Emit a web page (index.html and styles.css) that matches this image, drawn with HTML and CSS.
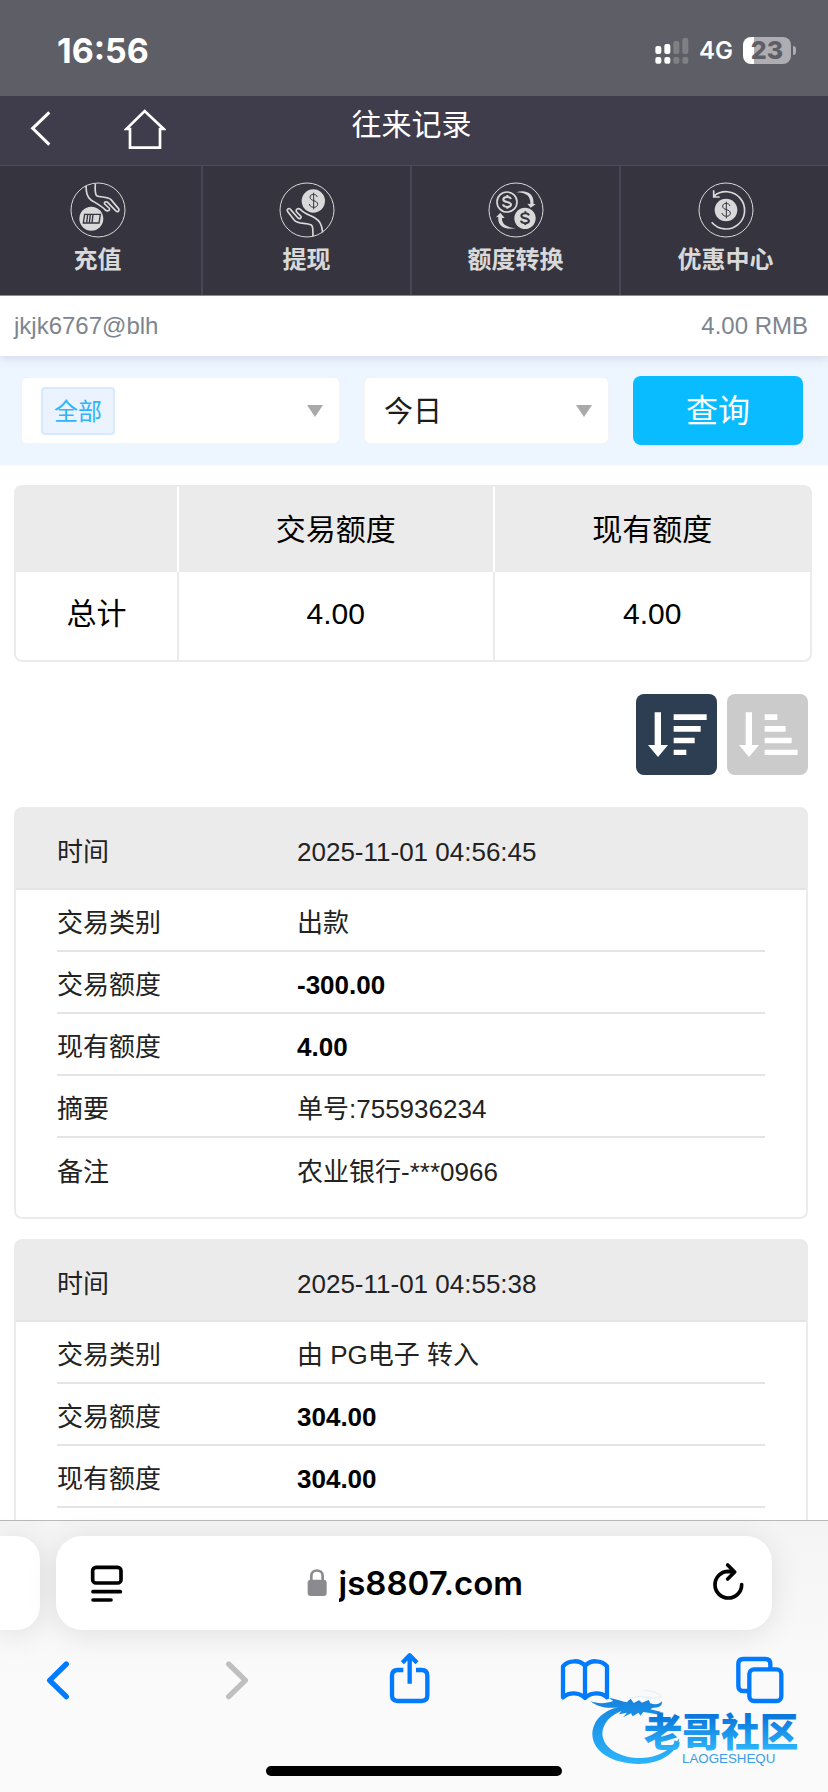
FILE: index.html
```html
<!DOCTYPE html>
<html lang="zh-CN">
<head>
    <meta charset="UTF-8">
    <meta name="viewport" content="width=device-width, initial-scale=1.0">
    <title>往来记录</title>
    <link rel="stylesheet" href="styles.css">
</head>
<body>
    <div class="status-bar">
        <span class="clock">16:56</span>
        <div class="status-icons">
            <svg class="signal" viewBox="0 0 102 81">
                <g fill="#fff">
                    <rect x="1" y="27" width="18" height="24" rx="6"/><rect x="1" y="60" width="18" height="20" rx="6"/>
                    <rect x="28" y="21" width="18" height="30" rx="6"/><rect x="28" y="60" width="18" height="20" rx="6"/>
                </g>
                <g fill="#7f7f84">
                    <rect x="55" y="12" width="18" height="39" rx="6"/><rect x="55" y="60" width="18" height="20" rx="6"/>
                    <rect x="82" y="3" width="18" height="48" rx="6"/><rect x="82" y="60" width="18" height="20" rx="6"/>
                </g>
            </svg>
            <span class="network">4G</span>
            <div class="battery">23</div>
        </div>
    </div>

    <header class="header">
        <div class="header-links">
            <a href="#" class="header-link" aria-label="返回">
                <svg class="back-icon" viewBox="90 329 66 114" fill="none" stroke="#fff" stroke-width="9"><path d="M148 336L98 384L148 433"/></svg>
            </a>
            <a href="#" class="header-link" aria-label="首页">
                <svg class="home-icon" viewBox="372 321 126 126" fill="none" stroke="#fff" stroke-width="8"><path d="M390 384H379L434 330L491 384H480V440H390Z"/></svg>
            </a>
        </div>
        <h1 class="title">往来记录</h1>
    </header>

    <nav class="nav">
        <a href="#" class="nav-item">
            <svg class="nav-icon" viewBox="209 545 168 168" fill="none" stroke="#d9d9d9" stroke-width="5">
                <circle cx="293" cy="629" r="81" stroke-width="3"/>
                <path d="M257 556C258 574 258 588 272 599C288 609 304 617 315 629C322 635 331 630 326 623L313 611C310 606 317 602 322 606L345 630C351 638 360 631 354 624L332 598C322 588 300 592 289 586C283 580 284 566 285 550"/>
                <circle cx="273" cy="655" r="36" fill="#d9d9d9" stroke="none"/>
                <g stroke="#35343f" stroke-width="4"><path d="M253 642H300L296 668H249Z"/><path d="M262 643L259 667M270 643L267 667M278 643L275 667"/></g>
            </svg>
            <span>充值</span>
        </a>
        <a href="#" class="nav-item">
            <svg class="nav-icon" viewBox="838 545 168 168" fill="none" stroke="#d9d9d9" stroke-width="5">
                <circle cx="922" cy="629" r="81" stroke-width="3"/>
                <path d="M969 696C966 670 959 661 946 653C927 643 913 639 902 627C895 622 886 628 891 635L904 648C906 654 900 657 895 653L873 628C868 620 859 627 865 635L884 660C895 673 918 666 935 674C942 680 939 694 940 708"/>
                <circle cx="941" cy="602" r="35" fill="#d9d9d9" stroke="none"/>
                <path stroke="#35343f" d="M953 590C951 579 931 580 931 590C931 604 954 598 954 612C954 624 931 624 929 611M942 577V627" stroke-width="3"/>
            </svg>
            <span>提现</span>
        </a>
        <a href="#" class="nav-item">
            <svg class="nav-icon" viewBox="221 545 168 168" fill="none" stroke="#d9d9d9" stroke-width="5">
                <circle cx="305" cy="629" r="81" stroke-width="3"/>
                <circle cx="278" cy="605" r="30"/>
                <path d="M290 596C287 588 268 588 267 597C266 608 290 602 290 613C288 622 268 622 266 612M279 584V591M279 618V625" stroke-width="6"/>
                <circle cx="332" cy="654" r="32" fill="#d9d9d9" stroke="none"/>
                <path stroke="#35343f" d="M344 645C341 637 322 637 321 646C320 657 344 651 344 662C342 671 322 671 320 661M333 633V640M333 667V674" stroke-width="6"/>
                <path fill="#d9d9d9" stroke="none" d="M306 576C331 567 361 577 357 610L364 612L349 622L339 610L348 611C349 588 337 577 306 576ZM306 683C277 690 248 681 252 650L245 651L258 637L271 653L263 653C262 672 276 682 306 683Z"/>
            </svg>
            <span>额度转换</span>
        </a>
        <a href="#" class="nav-item">
            <svg class="nav-icon" viewBox="850 545 168 168" fill="none" stroke="#d9d9d9" stroke-width="5">
                <circle cx="934" cy="629" r="81" stroke-width="3"/>
                <path d="M891 666A56 56 0 1 0 898 587M897 570V590H915"/>
                <circle cx="934" cy="629" r="34" fill="#d9d9d9" stroke="none"/>
                <path stroke="#35343f" d="M946 617C944 606 924 607 924 617C924 631 947 625 947 639C947 651 924 651 922 638M935 604V654" stroke-width="3"/>
            </svg>
            <span>优惠中心</span>
        </a>
    </nav>

    <main class="content">
        <div class="account">
            <span>jkjk6767@blh</span>
            <span>4.00 RMB</span>
        </div>

        <form class="filter">
            <label class="select-box">
                <select class="select-tag" aria-label="类别"><option>全部</option></select>
                <svg class="arrow" viewBox="0 0 16 12"><path d="M0 0H16L8 12Z" fill="#a9a9a9"/></svg>
            </label>
            <label class="select-box">
                <select class="select-plain" aria-label="日期"><option>今日</option></select>
                <svg class="arrow" viewBox="0 0 16 12"><path d="M0 0H16L8 12Z" fill="#a9a9a9"/></svg>
            </label>
            <button type="button" class="search-btn">查询</button>
        </form>

        <table class="summary">
            <thead>
                <tr><th class="col-name"></th><th>交易额度</th><th>现有额度</th></tr>
            </thead>
            <tbody>
                <tr><td>总计</td><td>4.00</td><td>4.00</td></tr>
            </tbody>
        </table>

        <div class="sort">
            <button type="button" class="sort-btn active" aria-label="降序">
                <svg viewBox="108 72 243 243" fill="#fff"><path d="M164 127H183V225H204L174 261L144 225H164Z"/><path d="M221 133H320V150H221ZM221 168H302V185H221ZM221 203H284V220H221ZM221 239H259V255H221Z"/></svg>
            </button>
            <button type="button" class="sort-btn" aria-label="升序">
                <svg viewBox="108 72 243 243" fill="#fff"><path d="M164 127H183V225H204L174 261L144 225H164Z"/><path d="M221 133H259V150H221ZM221 168H284V185H221ZM221 203H302V220H221ZM221 239H320V255H221Z"/></svg>
            </button>
        </div>

        <section class="record">
            <div class="record-head"><span>时间</span><span>2025-11-01 04:56:45</span></div>
            <div class="record-body">
                <div class="record-row"><span>交易类别</span><span>出款</span></div>
                <div class="record-row"><span>交易额度</span><b>-300.00</b></div>
                <div class="record-row"><span>现有额度</span><b>4.00</b></div>
                <div class="record-row"><span>摘要</span><span>单号:755936234</span></div>
                <div class="record-row"><span>备注</span><span>农业银行-***0966</span></div>
            </div>
        </section>

        <section class="record">
            <div class="record-head"><span>时间</span><span>2025-11-01 04:55:38</span></div>
            <div class="record-body">
                <div class="record-row"><span>交易类别</span><span>由 PG电子 转入</span></div>
                <div class="record-row"><span>交易额度</span><b>304.00</b></div>
                <div class="record-row"><span>现有额度</span><b>304.00</b></div>
            </div>
        </section>
    </main>

    <footer class="browser">
        <div class="tabs">
            <div class="tab-prev"></div>
            <div class="address">
                <button type="button" class="icon-btn" aria-label="页面设置">
                    <svg viewBox="270 220 102 117" fill="none" stroke="#000" stroke-width="11" stroke-linecap="round"><rect x="278" y="230" width="85" height="47" rx="10"/><path d="M279 303H361M279 328H333"/></svg>
                </button>
                <label class="url">
                    <svg class="lock" viewBox="922 237 60 84"><rect x="924" y="269" width="57" height="49" rx="9" fill="#8a8a8f"/><path d="M935 272V258C935 236 969 236 969 258V272" fill="none" stroke="#8a8a8f" stroke-width="8"/></svg>
                    <input class="url-input" type="text" value="js8807.com" aria-label="网址">
                </label>
                <button type="button" class="icon-btn" aria-label="刷新">
                    <svg viewBox="890 220 102 117" overflow="visible" fill="none" stroke="#000" stroke-width="11" stroke-linecap="round" stroke-linejoin="round"><path d="M982 282A40 40 0 1 1 942 242L961 244M940 223L961 244L940 265"/></svg>
                </button>
            </div>
        </div>
        <div class="tools">
            <button type="button" class="tool" aria-label="后退">
                <svg class="chevron" viewBox="84 480 180 180"><path d="M199 522L149 571L199 620"/></svg>
            </button>
            <button type="button" class="tool disabled" aria-label="前进">
                <svg class="chevron" viewBox="609 480 180 180"><path d="M686 522L736 571L686 620"/></svg>
            </button>
            <button type="button" class="tool" aria-label="分享">
                <svg viewBox="1136 480 180 180"><path d="M1209 540H1192Q1175 540 1175 557V616Q1175 633 1192 633H1264Q1281 633 1281 616V557Q1281 540 1264 540H1247M1228 581V498M1206 518L1228 496L1250 518"/></svg>
            </button>
            <button type="button" class="tool" aria-label="书签">
                <svg viewBox="417 480 180 180"><path d="M510 624C492 606 463 606 444 622V529C460 509 497 509 510 528C524 509 560 509 576 529V622C558 606 529 606 510 624ZM510 528V620"/></svg>
            </button>
            <button type="button" class="tool" aria-label="标签页">
                <svg viewBox="944 480 180 180"><path d="M1005 603H987Q972 603 972 588V522Q972 507 987 507H1053Q1068 507 1068 522V538"/><rect x="1005" y="538" width="96" height="95" rx="14"/></svg>
            </button>
        </div>
        <div class="home-indicator"></div>

        <svg class="watermark" viewBox="20 27 681 234">
            <defs>
                <linearGradient id="blue" gradientUnits="userSpaceOnUse" x1="0" y1="60" x2="0" y2="250">
                    <stop offset="0" stop-color="#1583df"/>
                    <stop offset="1" stop-color="#2bb4fb"/>
                </linearGradient>
                <linearGradient id="blueText" gradientUnits="userSpaceOnUse" x1="0" y1="110" x2="0" y2="208">
                    <stop offset="0" stop-color="#0a78dc"/>
                    <stop offset="1" stop-color="#2cb3fa"/>
                </linearGradient>
            </defs>
            <path fill="url(#blue)" d="M118 80C66 92 37 122 36 163C37 215 95 251 175 252C239 252 291 219 297 175C270 211 232 233 183 234C120 234 68 206 66 161C67 130 91 103 130 91Z"/>
            <path fill="url(#blue)" d="M30 63C52 72 78 71 99 63L85 53C109 57 126 64 139 67L151 56L160 69L176 61L185 68L205 60L210 70C226 76 237 72 245 64C246 78 237 84 218 83L210 88L241 95L237 104L204 98L189 96L180 107L175 98L157 109L152 100L128 112L140 98L116 103L125 91L98 96L113 82C82 86 55 83 30 63Z"/>
            <path fill="none" stroke="#cfe8fb" stroke-width="2" d="M145 55Q175 46 202 51M190 30Q240 37 242 50Q220 57 195 54"/>
            <text class="mark-name" x="190" y="199" fill="url(#blueText)">老哥社区</text>
            <text class="mark-sub" x="305" y="248" fill="#3b9de8">LAOGESHEQU</text>
        </svg>
    </footer>
</body>
</html>
```

FILE: styles.css
```css
* {
    box-sizing: border-box;
}

body {
    margin: 0;
    height: 100vh;
    display: flex;
    flex-direction: column;
    overflow: hidden;
    background-color: #fff;
    color: #000;
    font-family: "Liberation Sans", "Noto Sans CJK SC", sans-serif;
}

a {
    color: inherit;
    text-decoration: none;
}

button,
select,
input {
    font-family: inherit;
    border: none;
    margin: 0;
    padding: 0;
    background: none;
}

svg {
    display: block;
}

/* phone status bar */
.status-bar {
    display: flex;
    justify-content: space-between;
    align-items: center;
    height: 96px;
    padding: 4px 32px 0 57px;
    background-color: #5e5e67;
    color: #fff;
    font-family: Inter, sans-serif;
}

.clock {
    font-size: 34px;
    font-weight: 700;
}

.status-icons {
    display: flex;
    align-items: center;
    gap: 10px;
}

.signal {
    width: 34px;
    height: 27px;
}

.network {
    font-size: 24px;
    font-weight: 600;
}

.battery {
    position: relative;
    width: 48px;
    height: 27px;
    margin-right: 5px;
    border-radius: 8px;
    background: linear-gradient(to right, #fff 23%, #adadb2 23%);
    color: #5e5e67;
    font-size: 25px;
    font-weight: 800;
    line-height: 27px;
    text-align: center;
}

.battery::after {
    content: "";
    position: absolute;
    top: 9px;
    right: -5px;
    width: 3px;
    height: 9px;
    border-radius: 0 3px 3px 0;
    background-color: #adadb2;
}

/* site header */
.header {
    display: grid;
    grid-template-columns: 1fr auto 1fr;
    align-items: center;
    height: 70px;
    padding: 0 5px 4px 0;
    border-bottom: 1px solid #4b4a5a;
    background-color: #3f3d4b;
    color: #fff;
}

.header-links {
    display: flex;
    align-items: center;
    gap: 72px;
    padding-left: 30px;
}

.back-icon {
    width: 22px;
    height: 38px;
}

.home-icon {
    width: 42px;
    height: 42px;
}

.title {
    margin: 0;
    padding-bottom: 8px;
    font-size: 30px;
    font-weight: 400;
    line-height: 36px;
}

.nav {
    display: grid;
    grid-template-columns: repeat(4, 1fr);
    margin: 0 -2px 0 -6px;
    border-bottom: 1px solid #8d8995;
    background-color: #35343f;
    color: #d9d9d9;
}

.nav-item {
    display: flex;
    flex-direction: column;
    align-items: center;
    gap: 8px;
    padding: 16px 0 21px;
    border-right: 2px solid #474656;
    font-size: 24px;
    font-weight: 700;
    line-height: 28px;
}

.nav-item:last-child {
    border-right: none;
}

.nav-icon {
    width: 56px;
    height: 56px;
}

/* page content, cut off by the browser bar */
.content {
    flex: 1;
    min-height: 0;
    overflow: hidden;
}

.account {
    position: relative;
    display: flex;
    justify-content: space-between;
    align-items: center;
    height: 60px;
    padding: 0 20px 0 14px;
    background-color: #fff;
    box-shadow: 0 2px 10px rgba(80, 90, 120, 0.18);
    color: #7d8590;
    font-size: 24px;
}

.filter {
    display: grid;
    grid-template-columns: 319fr 245fr 170fr;
    align-items: center;
    gap: 24px;
    padding: 20px 25px 20px 21px;
    background-color: #edf5ff;
}

.select-box {
    display: flex;
    justify-content: space-between;
    align-items: center;
    height: 67px;
    padding: 0 16px 0 19px;
    border: 1px solid #f3f3f5;
    border-radius: 6px;
    background-color: #fff;
}

.select-tag,
.select-plain {
    appearance: none;
    -webkit-appearance: none;
    padding-top: 2px;
}

.select-tag {
    height: 48px;
    padding: 2px 11px 0;
    border: 2px solid #d7e9ff;
    border-radius: 4px;
    background-color: #ebf3ff;
    color: #2fb5fb;
    font-size: 24px;
}

.select-plain {
    color: #1c1c1c;
    font-size: 29px;
}

.arrow {
    width: 16px;
    height: 12px;
}

.search-btn {
    height: 69px;
    border-radius: 8px;
    background-color: #09bcff;
    color: #fff;
    font-size: 32px;
    line-height: 36px;
    cursor: pointer;
}

.summary {
    width: calc(100% - 30px);
    margin: 20px 16px 0 14px;
    border: 2px solid #ebebeb;
    border-radius: 8px;
    border-spacing: 0;
    table-layout: fixed;
    font-size: 30px;
    line-height: 36px;
    text-align: center;
}

.summary th {
    height: 85px;
    padding: 0;
    border-right: 2px solid #fff;
    background-color: #ebebeb;
    font-weight: 400;
}

.summary td {
    height: 88px;
    padding: 0 0 4px;
    border-right: 2px solid #ebebeb;
}

.summary th:last-child,
.summary td:last-child {
    border-right: none;
}

.summary .col-name {
    width: 163px;
}

.sort {
    display: flex;
    justify-content: flex-end;
    gap: 10px;
    margin: 32px 20px;
}

.sort-btn {
    width: 81px;
    height: 81px;
    border-radius: 8px;
    background-color: #cbcbcb;
    cursor: pointer;
}

.sort-btn.active {
    background-color: #2d3e53;
}

.record {
    margin: 0 20px 20px 14px;
    border: 2px solid #ebebeb;
    border-radius: 8px;
    color: #222;
    font-size: 26px;
    line-height: 36px;
}

.record-head,
.record-row {
    display: grid;
    grid-template-columns: 240px 1fr;
    align-items: center;
    padding-top: 6px;
    border-bottom: 2px solid #e4e4e4;
}

.record-head {
    height: 81px;
    padding-left: 41px;
    background-color: #ebebeb;
}

.record-body {
    padding: 0 41px 17px;
}

.record-row {
    height: 62px;
}

.record-row:nth-child(5) {
    border-bottom: none;
}

.record-row b {
    color: #000;
}

/* browser bar */
.browser {
    position: relative;
    padding: 15px 0 16px;
    border-top: 1px solid #b9b9b9;
    background: linear-gradient(#f4f4f4, #fafafa 60%);
}

.tabs {
    display: flex;
    gap: 16px;
    height: 94px;
    margin-right: 56px;
}

.tab-prev,
.address {
    background-color: #fff;
    box-shadow: 0 4px 30px rgba(0, 0, 0, 0.1);
}

.tab-prev {
    width: 40px;
    border-radius: 0 24px 24px 0;
}

.address {
    flex: 1;
    display: flex;
    justify-content: space-between;
    align-items: center;
    padding: 0 27px 0 34px;
    border-radius: 26px;
}

.icon-btn svg {
    width: 34px;
    height: 39px;
}

.url {
    display: flex;
    align-items: center;
    gap: 12px;
}

.lock {
    width: 20px;
    height: 28px;
}

.url-input {
    width: 190px;
    color: #000;
    font-family: Inter, sans-serif;
    font-size: 33px;
    font-weight: 600;
    outline: none;
}

.tools {
    display: flex;
    justify-content: space-between;
    padding: 20px 39px 0 28px;
}

.tool {
    width: 60px;
    height: 60px;
}

.tool svg {
    fill: none;
    stroke: #007aff;
    stroke-width: 13px;
    stroke-linejoin: round;
}

.tool .chevron {
    stroke-width: 16px;
    stroke-linecap: round;
}

.tool.disabled svg {
    stroke: #bfbfbf;
}

.home-indicator {
    width: 296px;
    height: 10px;
    margin: 56px auto 0;
    border-radius: 5px;
    background-color: #000;
}

.watermark {
    position: absolute;
    right: 14px;
    bottom: 25px;
    width: 227px;
    height: 78px;
}

.mark-name {
    font-family: "Noto Sans CJK SC", sans-serif;
    font-size: 116px;
    font-weight: 900;
}

.mark-sub {
    font-size: 40px;
}
```
